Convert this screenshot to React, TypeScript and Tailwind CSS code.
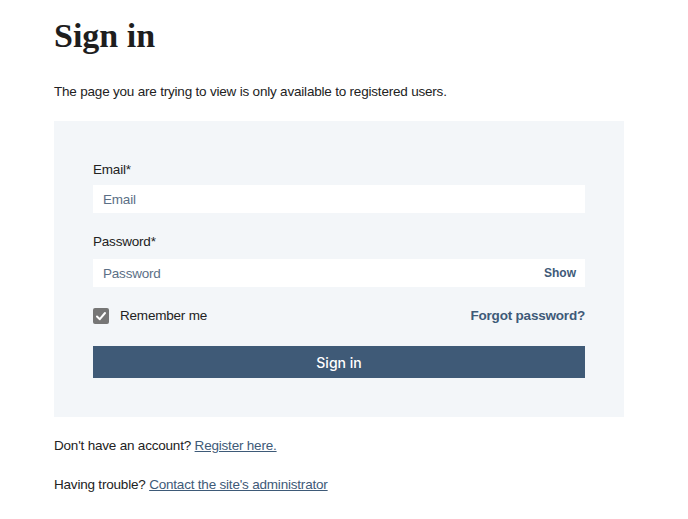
import { useState } from "react";

export default function App() {
  const [remember, setRemember] = useState(true);
  const [showPassword, setShowPassword] = useState(false);

  return (
    <div className="min-h-screen bg-white px-[54px] pt-[16px] font-['Liberation_Sans',Arial,sans-serif] text-[13.5px] tracking-[-0.2px] text-[#222222]">
      <h1 className="font-['Liberation_Serif','Times_New_Roman',serif] text-[34px] font-bold leading-[40px] tracking-normal text-[#1e1e1e]">
        Sign in
      </h1>
      <p className="mt-[26px] leading-[20px]">
        The page you are trying to view is only available to registered users.
      </p>

      <form
        className="mt-[19px] w-[570px] bg-[#f3f6f9] px-[39px] pt-[39px] pb-[39px]"
        onSubmit={(e) => e.preventDefault()}
      >
        <label className="block leading-[20px]">Email*</label>
        <input
          type="email"
          placeholder="Email"
          className="mt-[5px] block h-[28px] w-full bg-white px-[10px] text-[#222] outline-none placeholder:text-[#5b6f86]"
        />

        <label className="mt-[19px] block leading-[20px]">Password*</label>
        <div className="mt-[7px] flex h-[28px] w-full items-center bg-white pl-[10px] pr-[9px]">
          <input
            type={showPassword ? "text" : "password"}
            placeholder="Password"
            className="h-full flex-1 bg-transparent text-[#222] outline-none placeholder:text-[#5b6f86]"
          />
          <button
            type="button"
            onClick={() => setShowPassword(!showPassword)}
            className="text-[12px] font-bold tracking-normal text-[#3e5a78]"
          >
            Show
          </button>
        </div>

        <div className="mt-[19px] flex h-[20px] items-center justify-between">
          <label className="flex items-center gap-[11px]">
            <button
              type="button"
              onClick={() => setRemember(!remember)}
              className="flex h-[16px] w-[16px] items-center justify-center rounded-[2px] bg-[#767676]"
            >
              {remember && (
                <svg width="12" height="12" viewBox="0 0 12 12" fill="none">
                  <path d="M2 6.5 L4.8 9.2 L10 3" stroke="white" strokeWidth="2" strokeLinecap="round" strokeLinejoin="round" />
                </svg>
              )}
            </button>
            Remember me
          </label>
          <a href="#" className="font-bold text-[#3e5a78]">
            Forgot password?
          </a>
        </div>

        <button
          type="submit"
          className="mt-[20px] block h-[32px] w-full bg-[#3f5a77] font-['Inter',sans-serif] text-[14px] font-medium tracking-normal text-white"
        >
          Sign in
        </button>
      </form>

      <p className="mt-[19px] leading-[20px]">
        Don't have an account?{" "}
        <a href="#" className="text-[#3e5a78] underline">
          Register here.
        </a>
      </p>
      <p className="mt-[19px] leading-[20px]">
        Having trouble?{" "}
        <a href="#" className="text-[#3e5a78] underline">
          Contact the site's administrator
        </a>
      </p>
    </div>
  );
}
